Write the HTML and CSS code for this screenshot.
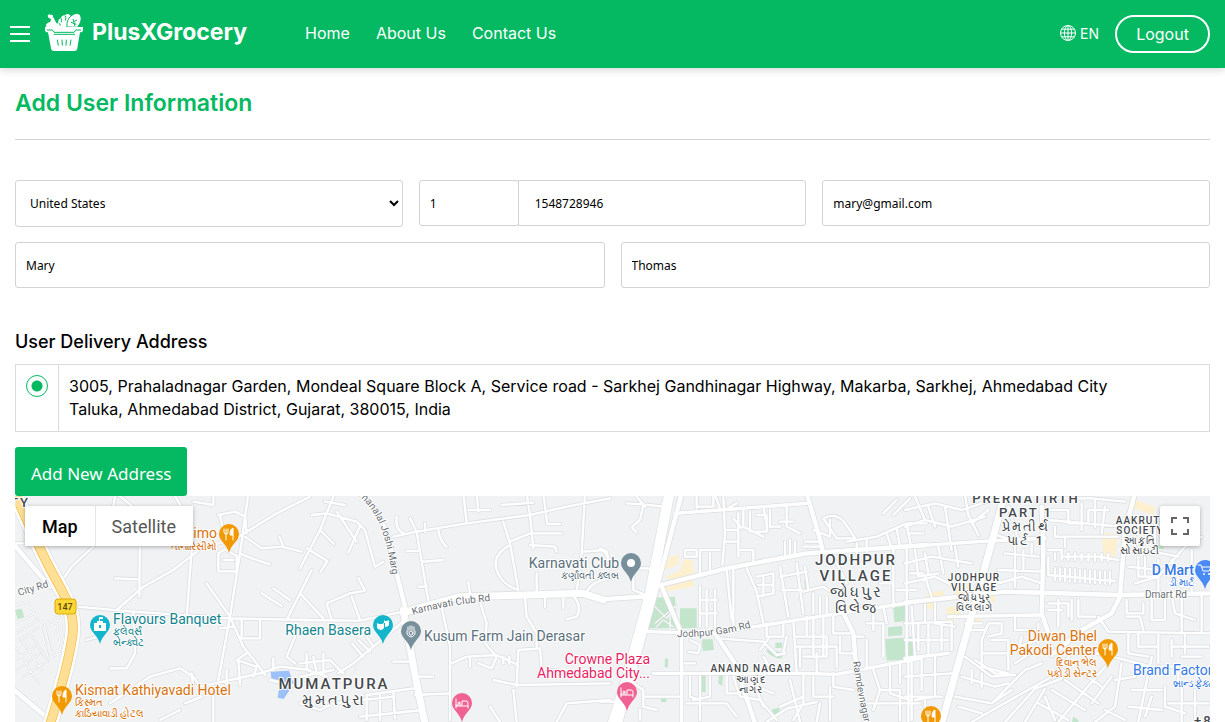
FILE: index.html
```html
<!DOCTYPE html>
<html lang="en">
<head>
    <meta charset="UTF-8">
    <meta name="viewport" content="width=device-width, initial-scale=1.0">
    <title>PlusXGrocery - Add User Information</title>
    <link rel="stylesheet" href="styles.css">
</head>
<body>
    <header class="header">
        <button class="menu-btn" type="button" aria-label="Menu"><span></span><span></span><span></span></button>
        <a class="logo" href="#">
            <svg class="logo-icon" viewBox="0 0 114 114" aria-hidden="true">
                <path class="white" d="M8 8q4-8 9-2 8-2 7 5l9 17q6 6 4 14H4q-4-6 4-12l8-4 2-8-8-4z"/>
                <path class="white" d="M38 44q-6-10 2-16-2-10 8-13 2-10 12-8 8-8 16 0l-8 36z"/>
                <path class="cut" d="M48 16q4 6 1 12M60 8q5 5 1 15M41 30q5 2 5 8"/>
                <path class="white edge" d="M66 42q-2-22 12-33 14-12 26-5 8 9 2 25l-8 14z"/>
                <path class="cut" d="M78 28l16 6M84 18l6 22M86 26l10-5"/>
                <path class="white" d="M0 42h114v8q0 8-9 8l-8 48q-1 8-9 8H27q-8 0-9-8L9 58Q0 58 0 50z"/>
                <path class="cut" d="M6 51h16l5 7h60l5-7h16M26 64h64M37 80l3 18M51 80l1 18M64 80l-1 18M78 80l-3 18"/>
            </svg>
            <span>PlusXGrocery</span>
        </a>
        <nav class="nav">
            <a href="#">Home</a>
            <a href="#">About Us</a>
            <a href="#">Contact Us</a>
        </nav>
        <a class="lang" href="#">
            <svg viewBox="0 0 16 16" width="16" height="16" aria-hidden="true">
                <circle cx="8" cy="8" r="7.5"/>
                <ellipse cx="8" cy="8" rx="3.6" ry="7.5"/>
                <path d="M8 .5v15M.5 8h15M1.6 4.2h12.8M1.6 11.8h12.8"/>
            </svg>
            <span>EN</span>
        </a>
        <button class="logout" type="button">Logout</button>
    </header>

    <main class="content">
        <h1 class="page-title">Add User Information</h1>

        <form class="user-form">
            <div class="row row-3">
                <select class="field" aria-label="Country">
                    <option>United States</option>
                </select>
                <div class="phone">
                    <input class="field code" type="text" value="1" aria-label="Country code">
                    <input class="field number" type="tel" value="1548728946" aria-label="Phone number">
                </div>
                <input class="field" type="email" value="mary@gmail.com" aria-label="Email">
            </div>
            <div class="row row-2">
                <input class="field" type="text" value="Mary" aria-label="First name">
                <input class="field" type="text" value="Thomas" aria-label="Last name">
            </div>

            <h2 class="section-title">User Delivery Address</h2>
            <div class="address">
                <div class="address-pick"><input type="radio" name="address" id="address1" checked></div>
                <label for="address1">3005, Prahaladnagar Garden, Mondeal Square Block A, Service road - Sarkhej Gandhinagar Highway, Makarba, Sarkhej, Ahmedabad City Taluka, Ahmedabad District, Gujarat, 380015, India</label>
            </div>
            <button class="add-btn" type="button">Add New Address</button>
        </form>

        <div class="map">
            <svg class="map-canvas" viewBox="0 0 1195 226" preserveAspectRatio="xMidYMin slice">
                <svg width="1195" height="226" viewBox="45 18 3585 678">
                    <defs>
                        <g id="minor">
                            <path d="M170 270l25-10 20-30 70-65 45-65 15-80M230 350l170 15 290 20 240 5M420 90l-2 230M345 265l73 3M575 180l-15 200M350 360l80-70 90-50 90-70 90-20 130-80 100-50M745 10l-25 180-30 190-35 190M620 280l70 100 40 90 40 50 25 35M400 365l5 125-25 45-50 0M330 640l120-80 90-25 40 25 20 30 180-40 60-20 90 10M575 550l5 45M720 190l35 15 55 18M735 140l50 35 60-5 60 15M838 140l12 30M935 240l-75 150M785 310l60 38M820 295l50 35M725 390v55h55v-55M580 35l60 10V15M520 10l30 50M655 75l50-10 30 15 5 50M660 75l12 60 40 5M655 190l20-12 35 20 0 46h-55zM670 210h30M260 450l40-12M820 505v35M885 440l-25 60 25 20M715 510l5 75M680 540v45M555 640l50-20M480 690l60-30M640 590v106M350 10l60 50M45 160h40l30 20M700 410l-40 5M740 490l-30 20 60 20-10 30M810 570l80 20"/>
                            <path d="M0 310l70 75M100 20L60 120 0 235M35 75l45-5 90 25 25 25 30 110 25-15M75 35l60 10M60 120l42 42M20 175l62 38-20 32M145 188l35-80M110 65l60 90M280 140l70-15 150-25 190-25 110-25 130-25M290 80q-5 40 22 50M330 85l20 40 15 90 20 115M370 215l60-5M375 100v25M320 183h38M355 290h25M415 120q5 35 25 50M490 10l10 90M530 10l5 55M505 60h65M605 45l95-7M680 10l10 65 10 100M730 10l12 92h38M610 95l20 65 25 140M630 155l60-25h95M690 165l75 5 5 15M630 165q-55 30-40 75t65 60M855 10l-10 180-15 115M850 185l60-5 15 25M710 250v60M735 315v35M790 320v35M822 320q25 30 8 60l-30 8M860 305q20-35 70-40M505 275l5 35M540 335l20 65-5 60 35 40-15 35-40-15M675 325l5 55 30 50 0 40M425 350l25 120v140M455 520l45-20 90-5 60 28M610 500v20M628 500v22M650 590l5-110 65-5 5 60 60 10M580 570l70 15 280-5M80 340l70-30 45-8-20-38M80 340l15 50M155 320l25 70M0 390l180 2 130-27M315 390L160 520l-45 30M155 460l35 40M175 450l35 35M200 440l20 30M510 500v30M280 515h45M350 560h50M200 615l140-20M345 615l105-5v80M180 680l190-20M570 650l30 46M640 600l10 96M770 696l30-56 130-10M20 490v50l60 20M0 520l90-10 40 40M40 500l10 50M0 560l100-20M70 490v60M200 615v75M240 610v80M280 605l5 80M100 640l180-20M0 640l60 20 40-20" transform="translate(900)"/>
                            <path d="M80 40l50 3 70 8M130 45l-10 45-25 22 15 15M110 20l25 30M0 175l20 10 10 50M100 240v60l50 20M105 235l80 0M230 70l160-12 230-18M290 15v40M290 50h50V15M345 15l15 40M370 15l5 120-8 90M375 60l35-20M375 120h40v35h-40M430 60v50l60 30M415 70v130M450 65v60M470 75h30v50h-30M510 60v50h30M560 50v60l40 20M540 95h40M490 50l12 65M400 85l25 30M300 180v70M330 190v50M255 180h35v20h-35zM300 180h60M420 180h40v40M555 155v45M570 150v50M585 155v45M615 155h50M610 170h60M400 240v170M380 240l15 150M440 235l30 70 20 95M470 260l50-10v60l-50 10M490 260v60M475 285h45M540 230l25 150M590 220l20 150M540 260l80-15M545 300h60M610 305l60-15 30 20M615 230l10 70M640 310v60M660 320v50M680 320v50M300 290v120M320 300v110M345 300v110M300 330h50M300 370h50M670 85q40-20 65 15t30 45l-55 0zM740 155l90-15 90-40h60M690 90v50l-50-20M770 160v30M800 150v35M860 130l15 45M890 115l10 55M920 100l12 65M930 130h40M700 200l40 80M880 170v180M840 280l40 0M920 170v330M930 250h40M890 300h60M850 70l40-40M880 75l50-50M500 400v40h50v-40M510 440l-30 40M350 445l140 10 40 40 25-5M560 440l-10 50M580 390l10 160M620 380v60h60v60h-70M640 385v110M670 380v120M700 370v60h50M590 470h120v60M650 490v60M590 440h30M600 470v60M720 440v50l40 0M760 440h30M610 550v90l-30 50M570 570l30 126M700 550v40l60 10M640 560v60h60M690 590v100M540 650l70-30M660 640l-10 56M270 450l30 15-5 25-30-5M255 520h30M270 560v60l30 10M330 560v60l-50 10M400 560l20 60 60 10 50 60M380 560v50h40M430 610l40-20 50 20M470 600l20 50M0 635h60M100 580l30 20v50l40 10M130 620h110M120 660v30M300 560v130M260 640h120l30 40M500 696l60-40 90-20M490 500l30 50M820 540l20 60-20 60M870 530v80l60 20M900 520v60M925 505v190M800 640h160M840 600h60v90M800 450l0 80M800 400l50 0 0 100M820 370v50M850 350l10 50" transform="translate(1800)"/>
                            <path d="M0 60l90-20 80 20 90-30M0 110l60-20 80 20 100-30M30 20l30 70M70 50l20 60M120 50l20 130M180 15l10 60 30 60M200 100l50-40M0 220l80-20 120 20M30 180l10 80 60-10M60 190l10 60M100 170l15 80M0 280l90-20 60 30M150 170l10 60M60 260l20 60M290 150l130-8M310 50l30 100M260 130l60 20M330 170v120M300 190l100 10M280 240l130 5M355 180v60M380 160v30M280 280l70-20 60 20M430 25h130l100 10M430 60h60v40h60V60h60M430 90l220 20M450 110v30h190M480 140v30M530 40v80M570 30v80M600 50l-10 80M430 180h40v20h110l60 10M430 200v50M450 235v35M465 235v38M480 236v38M495 237v38M510 238v38M525 240v36M540 241v36M555 242v36M570 243v36M585 244v36M600 245v36M615 246v36M430 255l200 18M450 190v20M470 190v20M490 190v20M510 190v20M530 192v20M550 192v20M570 192v20M590 192v20M610 192v20M700 80l60 10M690 120v60h60v-60M660 180l110 10 50 10M700 200v60h60v-50M720 200v60M670 230l90 10M690 280l70-20 80-90 50-30M760 260v60M800 210l30 80M860 180v130M665 330v40h50v-30M740 320v70h40v-70M800 320l10 50 60 20M830 320v110M665 380h40l10 40M890 310v120M580 380l30 45 305 5M840 430v60M670 430v60l60 10M700 430v40h60M800 470h110M800 450v50M830 500l60 0M760 430l0 90M430 360h40M430 340h60v40M460 330v80M520 330v50h50M500 330v60M250 400l-20 50v80l80 20M250 400l40 0v30l-40 10M260 450l50 0v90M230 490h80M210 510l60 40 60 5M190 420l50 0M140 400v80M60 345v50M90 340v60l60 10M20 350l10 150M0 400l140-5M40 400v80M70 400v90M110 400v80M0 450h130M330 380v40l60 0M350 440l-10 40M400 400v60M0 560l140-10M50 500v100M20 510v180M90 500v120l-60 10M0 620h110M180 500l80 60 60-5M170 560l100 30 40-10M150 620l110 20 60-40M160 650l70 20M200 540v40M230 550v40M260 640l100-100 50-20M200 696l80-46 160-90 60-70M300 696l90-100 80-30M360 696l60-100M400 640l90 50M440 600l100 60M480 570l100 70M520 540l70 50M540 600l-80 96M600 530l-60 70M420 620l30 70M560 640l60-80M620 500l120 30M740 500l-40 196M650 520l-20 130-60 46M690 560l-60 10M680 600h90M670 650l100 10M780 590v60l60 20M700 530h120v50M740 620l-20 60M830 590v106M870 600v96M790 640l120 0M60 620v70M600 660l60 30M180 400h50M310 480l120-40M330 520l60-40" transform="translate(2715)"/>
                        </g>
                        <g id="lane">
                            <path d="M45 400l60-30M45 430l70-40M60 450l70-50M45 345l40-10 25 50M120 400l60-20 16 105-50 18zM135 410l35-12 12 80-28 8zM45 470l70 110M65 450l60 90M90 430l55 85M45 510l60-40M50 540l70-50M70 560l60-40M45 210v60M1085 500l-20 40M1960 345l40 40 30-40M1965 400l60-50M1970 410l20-20 30 20M2010 330v85"/>
                        </g>
                        <g id="street">
                            <path d="M0 505l130-15M0 170l220-15 200-10M130 380l280-5M500 490l80 0" transform="translate(2715)"/>
                            <path d="M140 425l200 5 200-32 420-65M160 550h450l100 3 120-23 130-25M225 70l395-30M245 430v270" transform="translate(1800)"/>
                        </g>
                        <g id="major">
                            <path d="M30 150l120 140M30 590l120 100M1080 10l50 50 30 70 30 120 30 120M1800 328l155-10M2145 430l60 90 60 180M1985 290l55 130M2420 10l35 120 15 60M2530 370l30 60 10 120 25 146M3125 50l5 130-5 190 20 60M3405 10l-30 110-15 200-25 50-90 50-90 75M2715 338l300-33 340 10 290-5M1970 288l210-53 240-45 360-25"/>
                        </g>
                        <g id="avenue">
                            <path d="M1210 370l40-15 130-35 90-2 280-8 60 20M1210 360l25 140 15 80 25 120M3015 10l-60 220-55 200-75 270"/>
                        </g>
                        <path id="expressway" d="M2008 10l-60 310-78 280-32 100"/>
                        <path id="service-road" d="M2045 10l-55 210-70 260-60 220"/>
                        <path id="highway" d="M40 0C90 110 115 170 155 245S228 365 217 440 170 640 148 710"/>
                    </defs>
                    <g class="park">
                        <path d="M1965 323l60-3 6 95h-92zM2040 355h50v60h-50zM2106 448h32l4 32-34 3zM2326 458h20v16h-20zM2298 478l45 8 5 16-10 4q-35-8-40-28zM2412 270h12l2 30h-10zM2680 350l45-2v45l-42 4zM2664 412l43-4v28l-43 3zM2655 448l85-8 2 68-82 4zM1995 505l10 2-2 26-9-2zM2103 555h14v52h-12zM2157 555h12l-2 32-12-6zM1983 622h16v14h-16zM2316 658l22-5 2 16-22 6zM45 360l20-4 8 26-20 6zM3220 680l15 10v10h-20zM3470 165h20v12h-20z"/>
                    </g>
                    <path class="water" d="M812 545l55-3 14 40-30 45-18-4 6-38-24-10z"/>
                    <path class="plaza" d="M2010 200l28-5-4 30-44 15zM2050 208l28 2 3 40-58 18-34-5 50-20zM1980 285l100-20v25l-90 15-15-8zM2780 310l50-8v22l-50 6zM2865 285h40v30h-40zM2780 335h30v22h-30zM2840 350h40v24h-40zM2900 305h85v30h-85zM2840 385h22v20h-22zM2920 380h20v20h-20zM3305 125l50 10-10 65-35-5zM3390 25l75 25-5 25-75-25z"/>
                    <use href="#lane" class="casing w6"/>
                    <use href="#lane" class="fill w3"/>
                    <use href="#minor" class="casing w12"/>
                    <use href="#street" class="casing w14"/>
                    <use href="#major" class="casing w18"/>
                    <use href="#avenue" class="casing w26"/>
                    <use href="#service-road" class="casing w18"/>
                    <use href="#expressway" class="casing w34"/>
                    <use href="#minor" class="fill w7"/>
                    <use href="#street" class="fill w10"/>
                    <use href="#major" class="fill w13"/>
                    <use href="#avenue" class="fill w21"/>
                    <use href="#service-road" class="fill w13"/>
                    <use href="#expressway" class="fill w30"/>
                    <use href="#highway" class="casing w48"/>
                    <use href="#highway" class="fill w44"/>
                    <use href="#highway" class="highway-edge"/>
                    <use href="#highway" class="highway-fill"/>
                </svg>

                <defs>
                    <path id="pin" d="M0 29C-2 20-10 17-10 10a10 10 0 0 1 20 0C10 17 2 20 0 29z"/>
                    <g id="fork"><path d="M-5 5v3q0 2 2 2v6M-3 5v5M-1 5v3q0 2-2 2"/><path class="solid" d="M4 16V4q-3 1-3 7h3"/></g>
                    <g id="bed"><path d="M-6 6v9M-6 13H6v2M6 13v-3q0-2-2-2h-4v4h-6"/><circle cx="-3" cy="10" r="1"/></g>
                    <path id="joshi" d="M346 2C366 20 372 46 378 84"/>
                    <path id="club" d="M398 119Q430 109 476 105"/>
                    <path id="gam" d="M662 141Q700 142 738 131"/>
                    <path id="ramdev" d="M838 166Q842 195 852 240"/>
                </defs>

                <g class="road-label">
                    <text x="4" y="100" transform="rotate(-17 4 100)">City Rd</text>
                    <text><textPath href="#joshi">nanalal Joshi Marg</textPath></text>
                    <text><textPath href="#club">Karnavati Club Rd</textPath></text>
                    <text><textPath href="#gam">Jodhpur Gam Rd</textPath></text>
                    <text><textPath href="#ramdev">Ramdevnagar</textPath></text>
                    <text x="1130" y="102">Dmart Rd</text>
                </g>

                <rect class="shield" x="40" y="103" width="21" height="15" rx="3"/>
                <text class="shield-text" x="50" y="114">147</text>

                <g class="area big">
                    <text x="319" y="193">MUMATPURA</text>
                    <text x="319" y="209">મુમતપુરા</text>
                    <text x="841" y="69">JODHPUR</text>
                    <text x="841" y="85">VILLAGE</text>
                    <text x="841" y="101">જોધપુર</text>
                    <text x="841" y="117">વિલેજ</text>
                </g>
                <g class="area mid">
                    <text x="1011" y="7">PRERNATIRTH</text>
                    <text x="1011" y="21">PART 1</text>
                    <text x="1011" y="35">પ્રેમતીર્થ</text>
                    <text x="1011" y="49">પાર્ટ 1</text>
                    <text x="5" y="11">TY</text>
                    <text x="1193" y="229">+80</text>
                </g>
                <g class="area small">
                    <text x="736" y="176">ANAND NAGAR</text>
                    <text x="736" y="187">આણંદ</text>
                    <text x="736" y="197">નાગર</text>
                    <text x="959" y="85">JODHPUR</text>
                    <text x="959" y="95">VILLAGE</text>
                    <text x="959" y="105">જોધપુર</text>
                    <text x="959" y="115">વિલલાગે</text>
                    <text x="1125" y="28">AAKRUTI</text>
                    <text x="1125" y="38">SOCIETY</text>
                    <text x="1125" y="48">આકૃતિ</text>
                    <text x="1125" y="58">સોસાઇટી</text>
                </g>

                <g class="poi food">
                    <text class="end" x="202" y="42">Tanarissimo</text>
                    <text class="end sub" x="202" y="54">તાનારિસીમો</text>
                    <text x="60" y="199">Kismat Kathiyavadi Hotel</text>
                    <text class="sub" x="60" y="210">કિસ્મત</text>
                    <text class="sub" x="60" y="221">કાઠિયાવાડી હોટલ</text>
                    <text class="end" x="1082" y="145">Diwan Bhel</text>
                    <text class="end" x="1082" y="159">Pakodi Center</text>
                    <text class="end sub" x="1082" y="170">દિવાન ભેલ</text>
                    <text class="end sub" x="1082" y="181">પકોડી સેન્ટર</text>
                </g>
                <g class="poi fun">
                    <text x="98" y="128">Flavours Banquet</text>
                    <text class="sub" x="98" y="139">ફ્લેવર્સ</text>
                    <text class="sub" x="98" y="150">બેન્ક્વેટ</text>
                    <text class="end" x="356" y="139">Rhaen Basera</text>
                </g>
                <g class="poi place">
                    <text class="end" x="604" y="72">Karnavati Club</text>
                    <text class="end sub" x="604" y="83">કર્ણાવતી ક્લબ</text>
                    <text x="409" y="145">Kusum Farm Jain Derasar</text>
                </g>
                <g class="poi hotel">
                    <text class="end" x="635" y="168">Crowne Plaza</text>
                    <text class="end" x="635" y="182">Ahmedabad City...</text>
                </g>
                <g class="poi shop">
                    <text class="end strong" x="1179" y="79">D Mart</text>
                    <text class="end sub" x="1179" y="90">ડી માર્ટ</text>
                    <text x="1118" y="179">Brand Factory</text>
                    <text class="sub" x="1158" y="191">બ્રાન્ડ ફેક્ટરી</text>
                </g>

                <g class="pins">
                    <g transform="translate(214 28)"><use href="#pin" class="pin-food"/><use href="#fork" class="glyph"/></g>
                    <g transform="translate(47 190)"><use href="#pin" class="pin-food"/><use href="#fork" class="glyph"/></g>
                    <g transform="translate(1093 143)"><use href="#pin" class="pin-food"/><use href="#fork" class="glyph"/></g>
                    <g transform="translate(916 210)"><use href="#pin" class="pin-food"/><use href="#fork" class="glyph"/></g>
                    <g transform="translate(85 119)"><use href="#pin" class="pin-fun"/><path class="solid" fill-rule="evenodd" d="M-6 16V8h3V6h2V2h4v2H0v2h3v2h3v8zM-1 10h2v3h-2z"/></g>
                    <g transform="translate(368 119)"><use href="#pin" class="pin-fun"/><path class="solid" d="M-6 8l2 1h3l2-1v5q-3 4-7 0zM1 5l1 1h2l2-1v5q-1 2-4 2V8H1z"/></g>
                    <g transform="translate(396 125)"><use href="#pin" class="pin-place"/><path class="glyph" d="M-4 10v3q4 6 8 0v-3M-3 10V6M-1 9V5M1 9V5M3 10V6"/><circle class="glyph" cx="0" cy="12" r="2"/></g>
                    <g transform="translate(616 57)"><use href="#pin" class="pin-place"/><circle class="solid" cx="0" cy="10" r="4"/></g>
                    <g transform="translate(447 197)"><use href="#pin" class="pin-hotel"/><use href="#bed" class="glyph"/></g>
                    <g transform="translate(612 186)"><use href="#pin" class="pin-hotel"/><use href="#bed" class="glyph"/></g>
                    <g transform="translate(1190 64)"><use href="#pin" class="pin-shop"/><path class="glyph" d="M-7 5h3l2 6h6l2-4h-9"/><circle class="solid" cx="-1" cy="14" r="1"/><circle class="solid" cx="4" cy="14" r="1"/></g>
                </g>
            </svg>

            <div class="map-type">
                <button class="active" type="button">Map</button>
                <button type="button">Satellite</button>
            </div>
            <button class="map-full" type="button" aria-label="Toggle fullscreen view">
                <svg viewBox="0 0 18 18" width="18" height="18" aria-hidden="true"><path d="M0 0v6h2V2h4V0H0zM16 0h-4v2h4v4h2V0h-2zM16 16h-4v2h6v-6h-2v4zM2 12H0v6h6v-2H2v-4z"/></svg>
            </button>
        </div>
    </main>
</body>
</html>
```
FILE: styles.css
```css
* {
    box-sizing: border-box;
}

body {
    margin: 0;
    min-height: 100vh;
    display: flex;
    flex-direction: column;
    font-family: "Inter", sans-serif;
    font-size: 16px;
    color: #000;
    background: #fff;
}

a {
    color: inherit;
    text-decoration: none;
}

button {
    cursor: pointer;
}

/* header */
.header {
    display: flex;
    align-items: center;
    height: 68px;
    padding: 0 15px 0 10px;
    background: #04b962;
    color: #fff;
    box-shadow: 0 2px 8px rgba(0, 0, 0, 0.16);
}

.menu-btn {
    display: flex;
    flex-direction: column;
    gap: 5px;
    width: 20px;
    padding: 0;
    border: none;
    background: none;
}

.menu-btn span {
    height: 2px;
    background: #fff;
}

.logo {
    display: flex;
    align-items: center;
    gap: 9px;
    margin-left: 15px;
    padding-bottom: 4px;
    font-size: 23px;
    font-weight: 700;
}

.logo-icon {
    width: 38px;
    height: 38px;
}

.logo-icon .white {
    fill: #fff;
}

.logo-icon .edge {
    stroke: #04b962;
    stroke-width: 3;
}

.logo-icon .cut {
    fill: none;
    stroke: #04b962;
    stroke-width: 3;
}

.nav {
    display: flex;
    gap: 26px;
    margin-left: 58px;
    margin-right: auto;
    padding-bottom: 2px;
}

.lang {
    display: flex;
    align-items: center;
    gap: 4px;
    margin-right: 16px;
    padding-bottom: 2px;
    font-size: 14px;
}

.lang svg {
    fill: none;
    stroke: #fff;
}

.logout {
    width: 95px;
    height: 38px;
    border: 2px solid #fff;
    border-radius: 19px;
    background: none;
    color: #fff;
    font: inherit;
}

/* content */
.content {
    flex: 1;
    display: flex;
    flex-direction: column;
    padding: 0 15px;
}

.page-title {
    margin: 0 0 40px;
    padding: 20px 0;
    border-bottom: 1px solid #d3d3d3;
    font-size: 23px;
    font-weight: 600;
    line-height: 31px;
    color: #04b962;
}

.row {
    display: grid;
    align-items: start;
    gap: 16px;
    margin-bottom: 15px;
}

.row-3 {
    grid-template-columns: repeat(3, 1fr);
}

.row-2 {
    grid-template-columns: repeat(2, 1fr);
}

.field {
    width: 100%;
    min-width: 0;
    height: 46px;
    padding: 0 10px;
    border: 1px solid #d3d3d3;
    border-radius: 3px;
    background: #fff;
    color: #000;
    font-family: "Noto Sans", sans-serif;
    font-size: 12px;
}

select.field {
    height: 47px;
}

.phone {
    display: flex;
}

.phone .code {
    flex: 0 0 100px;
}

.phone .number {
    margin-left: -1px;
    padding-left: 16px;
    border-top-left-radius: 0;
    border-bottom-left-radius: 0;
}

.section-title {
    margin: 40px 0 8px;
    font-size: 18px;
    font-weight: 500;
    line-height: 28px;
}

.address {
    display: flex;
    border: 1px solid #dcdcdc;
    line-height: 23px;
}

.address-pick {
    padding: 10px;
    border-right: 1px solid #dcdcdc;
}

.address label {
    flex: 1;
    padding: 10px 50px 10px 10px;
}

.address-pick input {
    display: block;
    appearance: none;
    width: 22px;
    height: 22px;
    margin: 0;
    border: 1px solid #04b962;
    border-radius: 50%;
}

.address-pick input:checked {
    background: radial-gradient(circle, #04b962 5px, transparent 6px);
}

.add-btn {
    display: block;
    height: 49px;
    margin-top: 15px;
    padding: 4px 16px 0;
    border: none;
    border-radius: 3px;
    background: #04b962;
    color: #fff;
    font-family: "Noto Sans", sans-serif;
    font-size: 17px;
}

/* map */
.map {
    position: relative;
    flex: 1;
    min-height: 226px;
    overflow: hidden;
    background: #f1f2f4;
    font-family: Roboto, sans-serif;
}

.map-canvas {
    position: absolute;
    inset: 0;
    width: 100%;
    height: 100%;
}

.park { fill: #c3e5cb; }
.water { fill: #9cc0f9; }
.plaza { fill: #fdf0cf; }

.casing,
.fill,
.highway-edge,
.highway-fill {
    fill: none;
    stroke-linejoin: round;
    stroke-linecap: round;
}

.casing { stroke: #dde0e3; }
.fill { stroke: #fff; }
.highway-edge { stroke: #f5b83d; stroke-width: 29; }
.highway-fill { stroke: #fde096; stroke-width: 25; }

.w3 { stroke-width: 3; }
.w6 { stroke-width: 6; }
.w7 { stroke-width: 7; }
.w10 { stroke-width: 10; }
.w12 { stroke-width: 12; }
.w13 { stroke-width: 13; }
.w14 { stroke-width: 14; }
.w18 { stroke-width: 18; }
.w21 { stroke-width: 21; }
.w26 { stroke-width: 26; }
.w30 { stroke-width: 30; }
.w34 { stroke-width: 34; }
.w44 { stroke-width: 44; }
.w48 { stroke-width: 48; }

.map-canvas text {
    paint-order: stroke;
    stroke: #fff;
    stroke-width: 2px;
    stroke-linejoin: round;
}

.road-label {
    font-size: 10px;
    fill: #6a6f75;
}

.shield {
    fill: #fdd835;
    stroke: #dba80b;
}

.map-canvas .shield-text {
    font-size: 9px;
    font-weight: 500;
    fill: #5a4a10;
    stroke: none;
    text-anchor: middle;
}

.area {
    fill: #45494d;
    font-weight: 500;
    text-anchor: middle;
}

.area.big {
    font-size: 15px;
    letter-spacing: 2px;
}

.area.mid {
    font-size: 13px;
    letter-spacing: 2px;
}

.area.small {
    font-size: 10px;
    letter-spacing: 1px;
}

.poi { font-size: 14px; }
.poi .sub { font-size: 10px; }
.poi .end { text-anchor: end; }
.poi .strong { font-weight: 500; }

.food { fill: #d9730d; }
.fun { fill: #12858e; }
.place { fill: #5b707c; }
.hotel { fill: #e91e63; }
.shop { fill: #3478e5; }

.pins { stroke-linecap: round; }
.pin-food { fill: #f29900; }
.pin-fun { fill: #12b5cb; }
.pin-place { fill: #78909c; }
.pin-hotel { fill: #f06292; }
.pin-shop { fill: #4a8af4; }

.glyph {
    fill: none;
    stroke: #fff;
}

.solid { fill: #fff; }

.map-type {
    position: absolute;
    top: 10px;
    left: 10px;
    display: flex;
    box-shadow: 0 1px 4px rgba(0, 0, 0, 0.3);
}

.map-type button {
    height: 40px;
    padding: 0 17px;
    border: none;
    background: #fff;
    color: #565656;
    font-family: Roboto, sans-serif;
    font-size: 18px;
}

.map-type button + button {
    padding-left: 16px;
    border-left: 1px solid #e6e6e6;
}

.map-type .active {
    color: #000;
    font-weight: 500;
}

.map-full {
    position: absolute;
    top: 10px;
    right: 10px;
    display: flex;
    align-items: center;
    justify-content: center;
    width: 40px;
    height: 40px;
    padding: 0;
    border: none;
    border-radius: 2px;
    background: #fff;
    box-shadow: 0 1px 4px rgba(0, 0, 0, 0.3);
}

.map-full svg {
    fill: #666;
}
```
